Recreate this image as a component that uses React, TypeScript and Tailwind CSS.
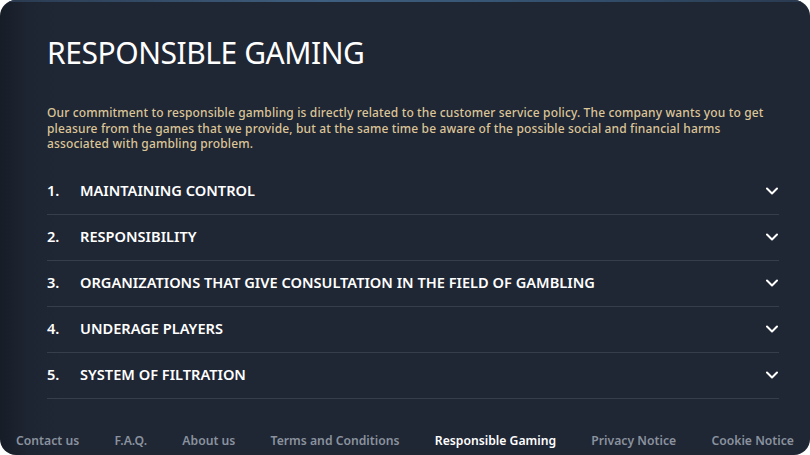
import React from "react";

const items = [
  "MAINTAINING CONTROL",
  "RESPONSIBILITY",
  "ORGANIZATIONS THAT GIVE CONSULTATION IN THE FIELD OF GAMBLING",
  "UNDERAGE PLAYERS",
  "SYSTEM OF FILTRATION",
];

const links = [
  { label: "Contact us", active: false },
  { label: "F.A.Q.", active: false },
  { label: "About us", active: false },
  { label: "Terms and Conditions", active: false },
  { label: "Responsible Gaming", active: true },
  { label: "Privacy Notice", active: false },
  { label: "Cookie Notice", active: false },
];

function Chevron() {
  return (
    <svg width="12" height="8" viewBox="0 0 12 8" fill="none">
      <polyline points="1,1.5 6,6.5 11,1.5" stroke="#ffffff" strokeWidth="2" strokeLinecap="round" strokeLinejoin="round" />
    </svg>
  );
}

export default function App() {
  return (
    <div className="w-[810px] h-[455px] bg-white" style={{ fontFamily: '"Noto Sans", "Open Sans", sans-serif' }}>
      <div className="relative w-full h-full rounded-2xl overflow-hidden bg-[linear-gradient(90deg,#171d27_0px,#1e2532_28px,#1f2634_60px)] flex flex-col">
        <div className="absolute top-0 left-0 right-0 h-[2px] bg-[linear-gradient(90deg,#2a3a4f,#3f5f80_40%,#33506e_70%,#2a3a4f)]" />
        <div className="pl-[47px] pr-[31px]">
          <h1 className="pt-[35px] text-[30px] leading-9 font-normal text-white tracking-[-0.45px]">RESPONSIBLE GAMING</h1>
          <p className="mt-[34px] text-[12px] leading-[15.6px] font-medium text-[#dcc597] tracking-[0.14px]">
            Our commitment to responsible gambling is directly related to the customer service policy. The company wants you to get pleasure from the games that we provide, but at the same time be aware of the possible social and financial harms associated with gambling problem.
          </p>
          <div className="mt-[17px]">
            {items.map((t, i) => (
              <div key={t} className="h-[46px] flex items-center border-b border-[#363e4b] text-white">
                <span className="w-[33px] text-[14.6px] font-semibold">{i + 1}.</span>
                <span className="flex-1 text-[14.6px] font-semibold">{t}</span>
                <span className="pr-[1px] flex items-center"><Chevron /></span>
              </div>
            ))}
          </div>
        </div>
        <div className="mt-auto px-4 pb-[5px] flex justify-between">
          {links.map((l) => (
            <span key={l.label} className={`text-[12.2px] leading-[18px] font-semibold ${l.active ? "text-white" : "text-[#8a929e]"}`}>
              {l.label}
            </span>
          ))}
        </div>
      </div>
    </div>
  );
}
